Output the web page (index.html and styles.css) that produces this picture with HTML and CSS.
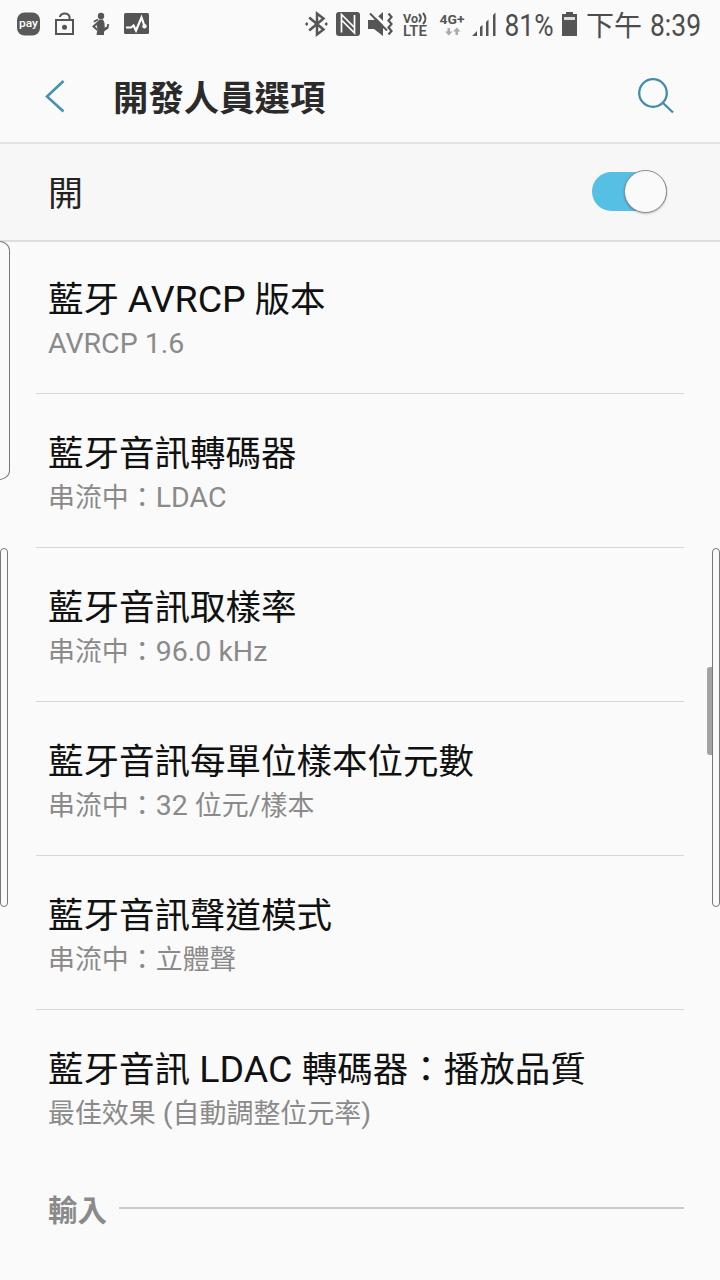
FILE: index.html
```html
<!DOCTYPE html>
<html lang="zh-Hant">
<head>
<meta charset="utf-8">
<title>開發人員選項</title>
<link rel="stylesheet" href="styles.css">
</head>
<body>
<div class="screen">
  <div class="status">
    <svg class="status-left" width="150" height="48" viewBox="0 0 150 48">
      <rect x="17" y="12.500" width="23" height="23" rx="7.500" fill="#595959"/>
      <text class="pay" x="19" y="27" textLength="19" lengthAdjust="spacingAndGlyphs">pay</text>
      <g fill="none" stroke="#555" stroke-width="2">
        <rect x="56" y="20" width="17" height="14"/>
        <path d="M60 17V16.500a5 4.500 0 0 1 9.500 0V20"/>
      </g>
      <circle cx="64.500" cy="27.300" r="2.500" fill="#555"/>
      <circle cx="101" cy="16" r="3.200" fill="#555"/>
      <path d="M98 19.500L93.800 21.800" stroke="#555" stroke-width="1.800"/>
      <path d="M98.500 22L93.500 26.500L97.500 30" fill="none" stroke="#555" stroke-width="2"/>
      <path d="M99 19.500h4l1.500 3.500 .2 4.500 2-.8 .5-2.700 2 .3-.8 4.200-3.800 2.500-.6 1V35h-7.500l1-6-1-4.500z" fill="#555"/>
      <rect x="124" y="13" width="25" height="21" rx="1.500" fill="#555"/>
      <path d="M126 27.500H131L133.500 25.500L136 30.500L141.500 17.500L144.500 26" fill="none" stroke="#fff" stroke-width="2.200"/>
      <circle cx="144.500" cy="26.300" r="2.200" fill="#fff"/>
    </svg>
    <svg class="status-right" width="415" height="48" viewBox="305 0 415 48">
      <path d="M309.200 17.500L323.500 29.500L317 34.500V13.500L323.500 18.500L309.200 30.500" fill="none" stroke="#555" stroke-width="2.500"/>
      <path d="M305 24l1.700-1.900 1.700 1.900-1.700 1.900zM324.500 24l1.700-1.900 1.700 1.900-1.700 1.900z" fill="#555"/>
      <rect x="336" y="12" width="24" height="24" rx="3" fill="#555"/>
      <path d="M341.500 32.500V14.500L354.500 27.500V15M341.500 20L354.500 33V27" fill="none" stroke="#fff" stroke-width="1.700"/>
      <path d="M368 20h6l9-8v24l-9-7h-6z" fill="#555"/>
      <path d="M371.500 11.500L388 28" stroke="#fafafa" stroke-width="3"/>
      <path d="M370 13.500L387 30.500" stroke="#555" stroke-width="2"/>
      <path d="M388.500 13.500l3 3.500-3 3.500 3 3.500-3 3.500 3 3.500-3 3.500" fill="none" stroke="#555" stroke-width="2.200"/>
      <text class="tiny" x="403" y="22.500" textLength="15" lengthAdjust="spacingAndGlyphs">Vo</text>
      <path d="M419 14q3.500 4 0 8M423 13q5 5.500 0 11" fill="none" stroke="#555" stroke-width="2"/>
      <text class="lte" x="403" y="36" textLength="24" lengthAdjust="spacingAndGlyphs">LTE</text>
      <text class="tiny" x="439.500" y="23.500" textLength="25" lengthAdjust="spacingAndGlyphs">4G+</text>
      <path d="M447.500 28h2.500v3.500h2.500l-3.700 4-3.700-4h2.400zM455.500 35h2.500v-3.500h2.500l-3.700-4-3.700 4h2.400z" fill="#aaa"/>
      <path d="M472 36L477 31V36zM480 36V27l2.500-2v11zM486 36V22l2.500-2.500v16.500zM493 36V15l2.500-2.500V36z" fill="#555"/>
      <text class="clock" x="504.500" y="35.500" textLength="49" lengthAdjust="spacingAndGlyphs">81%</text>
      <path d="M562 14h4v-2h7v2h4v22h-15z" fill="#555"/>
      <rect x="564" y="17" width="11" height="3" fill="#ddd"/>
      <text class="clock-cjk" x="586" y="35.500" textLength="56" lengthAdjust="spacingAndGlyphs">下午</text>
      <text class="clock" x="650" y="35.500" textLength="51" lengthAdjust="spacingAndGlyphs">8:39</text>
    </svg>
  </div>
  <header class="appbar">
    <svg width="24" height="36" viewBox="44 79 24 36"><path d="M63.500 81L47 96.500L63.500 111.500" fill="none" stroke="#4592ae" stroke-width="2.600"/></svg>
    <h1 class="heading">開發人員選項</h1>
    <svg width="40" height="40" viewBox="636 77 40 40" fill="none" stroke="#3f8dab" stroke-width="2.300"><circle cx="653" cy="93" r="13.800"/><path d="M662.500 102.500L673 112.500"/></svg>
  </header>
  <div class="master"><span class="state">開</span><span class="switch"><span class="knob"></span></span></div>
  <main class="list">
    <div class="item"><div class="title">藍牙 <span class="lt">AVRCP</span> <span>版本</span></div><div class="sub"><span class="ls">AVRCP 1.6</span></div></div>
    <div class="item"><div class="title">藍牙音訊轉碼器</div><div class="sub">串流中：<span class="ls">LDAC</span></div></div>
    <div class="item"><div class="title">藍牙音訊取樣率</div><div class="sub">串流中：<span class="ls">96.0 kHz</span></div></div>
    <div class="item"><div class="title">藍牙音訊每單位樣本位元數</div><div class="sub">串流中：<span class="ls">32 </span>位元<span class="ls">/</span>樣本</div></div>
    <div class="item"><div class="title">藍牙音訊聲道模式</div><div class="sub">串流中：立體聲</div></div>
    <div class="item last"><div class="title">藍牙音訊<span class="lt"> LDAC </span>轉碼器：播放品質</div><div class="sub">最佳效果<span class="ls"> (</span>自動調整位元率<span class="ls">)</span></div></div>
  </main>
  <div class="section"><span>輸入</span><span class="rule"></span></div>
  <div class="edge edge-top"></div>
  <div class="edge edge-left"></div>
  <div class="thumb"></div>
  <div class="edge edge-right"></div>
</div>
</body>
</html>
```
FILE: styles.css
```css
* { box-sizing: border-box; }
body { margin: 0; }
.screen {
  position: relative;
  width: 720px;
  height: 1280px;
  overflow: hidden;
  background: #fafafa;
  color: #111;
  font-family: Roboto, "Noto Sans CJK TC", sans-serif;
}
.status { display: flex; justify-content: space-between; height: 50px; }
.status svg, .appbar svg { display: block; }
.pay { font: 500 11.5px Roboto, sans-serif; fill: #fff; }
.tiny { font: 700 13.5px Roboto, sans-serif; fill: #555; }
.lte { font: 600 14px Roboto, sans-serif; fill: #555; }
.clock { font: 400 30.5px Roboto, sans-serif; fill: #4d4d4d; }
.clock-cjk { font: 400 28px "Noto Sans CJK TC", sans-serif; fill: #4d4d4d; }
.appbar {
  display: flex;
  align-items: center;
  height: 94px;
  padding: 1px 44px 0;
  border-bottom: 2px solid #e2e2e2;
}
.heading {
  flex: 1;
  margin: 0 0 0 45px;
  padding-top: 4px;
  font-size: 35.4px;
  line-height: 50px;
  font-weight: 700;
  color: #2b2b2b;
}
.master {
  display: flex;
  align-items: center;
  justify-content: space-between;
  height: 98px;
  padding: 0 53px 1px 48px;
  border-bottom: 2px solid #dedede;
  background: #f7f7f7;
  color: #222;
  font-size: 35px;
}
.state { padding-bottom: 3px; }
.switch {
  display: flex;
  justify-content: flex-end;
  align-items: center;
  width: 75px;
  height: 39px;
  border-radius: 20px;
  background: #55bfe4;
}
.knob {
  flex: none;
  width: 43px;
  height: 43px;
  border: 1px solid #8b8b8b;
  border-radius: 50%;
  background: #fafafa;
  box-shadow: 0 1px 2px rgba(0, 0, 0, .25);
}
.list { padding: 0 36px; }
.item { height: 154px; padding: 37px 12px 0; border-bottom: 1px solid #d6d6d6; white-space: pre; }
.item:first-child { height: 152px; padding-top: 34px; }
.item:first-child .sub, .last .sub { padding-top: 2px; }
.item.last { padding-top: 36px; border-bottom-color: transparent; }
.title { height: 46px; line-height: 46px; font-size: 35.5px; }
.lt { font-size: 37.5px; }
.sub { padding-top: 1px; line-height: 40px; font-size: 26.95px; color: #8a8a8a; }
.ls { font-size: 28.5px; }
.section {
  display: flex;
  align-items: center;
  gap: 12px;
  height: 88px;
  padding: 0 36px 0 48px;
  color: #8a8a8a;
  font-size: 29.5px;
  font-weight: 700;
}
.rule { flex: 1; height: 2px; background: #ccc; }
.edge { position: absolute; border: 1px solid #777; }
.edge-top { left: -12px; top: 241px; width: 22px; height: 239px; border-radius: 12px / 10px; }
.edge-left { left: 0; top: 548px; width: 8px; height: 359px; border-radius: 4px; }
.edge-right { left: 712px; top: 548px; width: 8px; height: 359px; border-radius: 4px; }
.thumb { position: absolute; left: 707px; top: 667px; width: 6px; height: 88px; border-radius: 3px 0 0 3px; background: #a3a3a3; }
```
